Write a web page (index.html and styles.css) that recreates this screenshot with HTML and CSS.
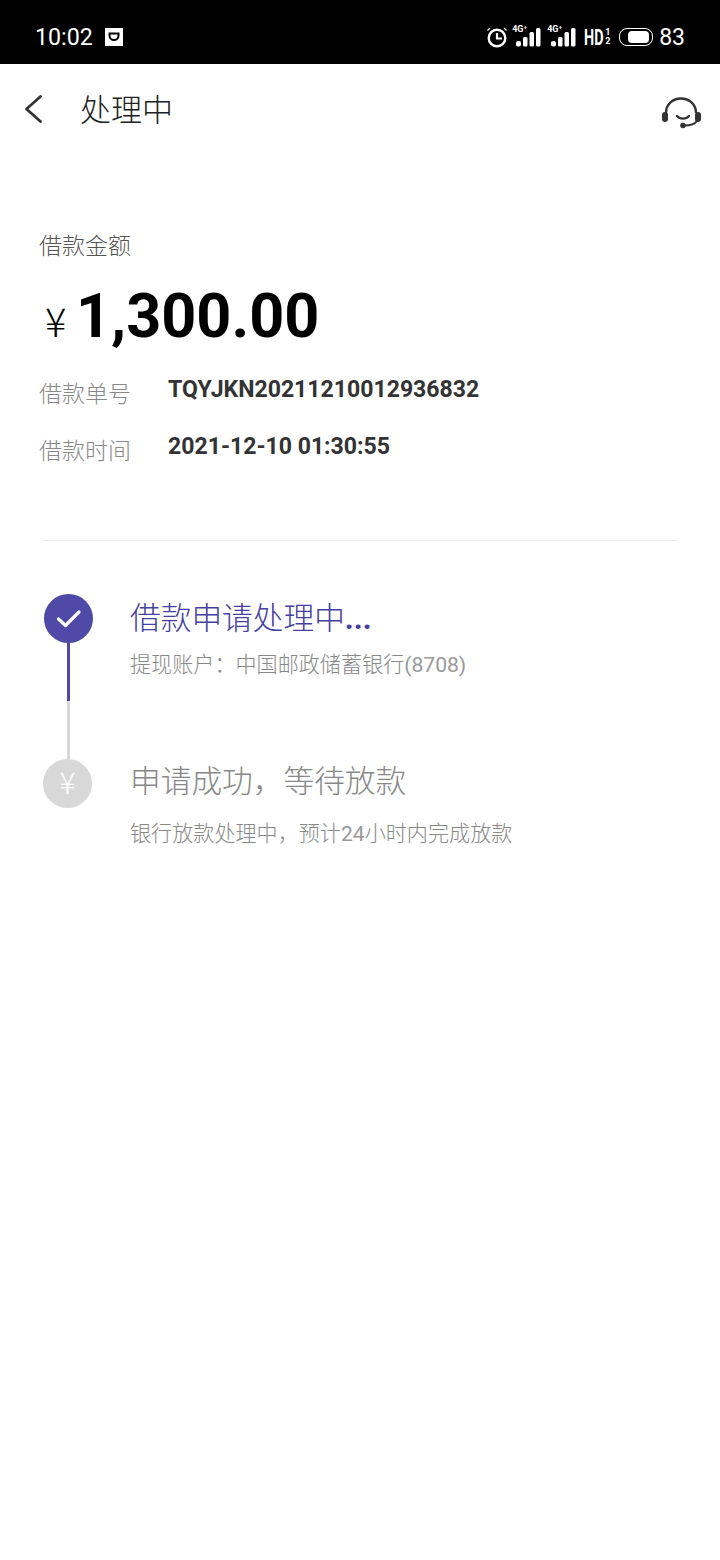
FILE: index.html
```html
<!DOCTYPE html>
<html lang="zh-CN">
<head>
<meta charset="utf-8">
<title>处理中</title>
<link rel="stylesheet" href="styles.css">
</head>
<body>
<header class="status">
  <div class="status-left">
    <span class="clock">10:02</span>
    <svg class="app-icon" width="20" height="20" viewBox="0 0 20 20"><path fill="#fff" fill-rule="evenodd" d="M1 1h18v18H1zM4.500 5.500v3a5.500 5.500 0 0 0 11 0v-3zM6.500 7.500h7v1a3.500 3.500 0 0 1-7 0z"/></svg>
  </div>
  <div class="status-right">
    <svg class="alarm" width="22" height="22" viewBox="0 0 22 22" fill="none" stroke="#fff"><circle cx="11" cy="12" r="8.300" stroke-width="2.400"/><path d="M11 7V12.500H16" stroke-width="2.200"/><path d="M1.500 4.500 4 2M20.500 4.500 18 2" stroke-width="1.300"/></svg>
    <div class="signal">
      <span class="net">4G⁺</span>
      <svg width="30" height="20" viewBox="0 0 30 20" fill="#fff"><rect x="5" y="14" width="5" height="5.500" rx="2"/><rect x="12" y="10" width="4.500" height="9.500" rx="1.500"/><rect x="18.500" y="5" width="4.500" height="14.500" rx="1.500"/><rect x="25" y="1" width="4.500" height="18.500" rx="1.500"/></svg>
    </div>
    <div class="signal">
      <span class="net">4G⁺</span>
      <svg width="30" height="20" viewBox="0 0 30 20" fill="#fff"><rect x="5" y="14" width="5" height="5.500" rx="2"/><rect x="12" y="10" width="4.500" height="9.500" rx="1.500"/><rect x="18.500" y="5" width="4.500" height="14.500" rx="1.500"/><rect x="25" y="1" width="4.500" height="18.500" rx="1.500"/></svg>
    </div>
    <div class="hd"><span class="hd-text">HD</span><span class="hd-sub">1<br>2</span></div>
    <div class="battery"><div class="battery-fill"></div></div>
    <span class="level">83</span>
  </div>
</header>

<nav class="nav">
  <div class="nav-left">
    <svg width="20" height="30" viewBox="0 0 20 30" fill="none" stroke="#333" stroke-width="2.800" stroke-linecap="round" stroke-linejoin="round"><path d="M16.500 2.500 2.500 15 16.500 27.500"/></svg>
    <h1 class="nav-title">处理中</h1>
  </div>
  <svg class="support" width="40" height="32" viewBox="0 0 40 32" fill="none" stroke="#333"><path d="M5 16C5 7 12 1.500 20 1.500S35 7 35 16" stroke-width="2.400"/><path d="M16 19c3 3.500 9 3.500 12 0" stroke-width="2.400" stroke-linecap="round"/><path d="M36 24c-2 3-6 4.500-13 4.500" stroke-width="2"/><rect x="1" y="15" width="6" height="10" rx="3" fill="#333" stroke="none"/><rect x="34" y="15" width="6" height="10" rx="3" fill="#333" stroke="none"/><circle cx="22" cy="28.500" r="2.800" fill="#333" stroke="none"/></svg>
</nav>

<main class="content">
  <section class="summary">
    <p class="amount-label">借款金额</p>
    <div class="amount"><span class="currency">¥</span><span class="value">1,300.00</span></div>
    <div class="meta-row"><span class="meta-label">借款单号</span><span class="meta-value">TQYJKN20211210012936832</span></div>
    <div class="meta-row"><span class="meta-label">借款时间</span><span class="meta-value">2021-12-10 01:30:55</span></div>
  </section>
  <hr class="divider">
  <section class="timeline">
    <div class="rail">
      <span class="dot dot-active">
        <svg width="26" height="20" viewBox="0 0 26 20" fill="none" stroke="#fff" stroke-width="3.200" stroke-linecap="round" stroke-linejoin="round"><path d="M2.500 10 9.500 16.500 23 3"/></svg>
      </span>
      <span class="line line-active"></span>
      <span class="line line-idle"></span>
      <span class="dot dot-idle">¥</span>
    </div>
    <div class="steps">
      <div class="step step-first">
        <p class="step-title step-title-active">借款申请处理中<span class="ellipsis">...</span></p>
        <p class="step-desc">提现账户：中国邮政储蓄银行<span class="num">(8708)</span></p>
      </div>
      <div class="step step-second">
        <p class="step-title step-title-idle">申请成功，等待放款</p>
        <p class="step-desc">银行放款处理中，预计<span class="num">24</span>小时内完成放款</p>
      </div>
    </div>
  </section>
</main>
</body>
</html>
```
FILE: styles.css
```css
* { box-sizing: border-box; }
html, body { margin: 0; padding: 0; }
body {
  width: 720px;
  height: 1560px;
  background: #fff;
  font-family: Roboto, "Noto Sans CJK SC", sans-serif;
  overflow: hidden;
}
p, h1 { margin: 0; font-weight: 400; }

.status {
  height: 64px;
  background: #000;
  color: #fff;
  display: flex;
  justify-content: space-between;
  align-items: center;
  padding: 16px 35px 6px 35px;
}
.status-left { display: flex; align-items: center; gap: 11px; }
.clock { font-size: 23.200px; }
.status-right { display: flex; align-items: center; }
.alarm { margin-right: 3px; }
.signal { position: relative; width: 30px; height: 20px; margin-right: 5px; }
.net { position: absolute; left: 1px; top: -3px; font-size: 9px; line-height: 11px; font-weight: 700; }
.hd { display: flex; align-items: center; width: 28px; margin-left: 3px; }
.hd-text { width: 21px; font-size: 22.500px; font-weight: 700; transform: scaleX(.64); transform-origin: left center; }
.hd-sub { font-size: 9px; line-height: 9px; font-weight: 700; }
.battery { width: 34px; height: 18px; border: 1.500px solid #fff; border-radius: 8px; padding: 2px 3px 2px 8px; margin: 0 6px 0 7px; }
.battery-fill { height: 100%; background: #fff; border-radius: 4px; }
.level { font-size: 23px; }

.nav {
  height: 90px;
  display: flex;
  justify-content: space-between;
  align-items: center;
  padding: 0 19px 0 24px;
}
.nav-left { display: flex; align-items: center; gap: 36px; }
.nav-title { font-size: 31px; color: #222; line-height: 44px; margin-top: 4px; font-weight: 300; }
.support { margin-top: 7px; }

.content { padding: 0 43px; }
.summary { margin-left: -4px; padding-top: 77px; }
.amount-label { font-size: 23px; line-height: 32px; color: #555; font-weight: 300; }
.amount { display: flex; align-items: baseline; margin: 18px 0 22px; padding-left: 6px; height: 70px; }
.currency { font-family: "Noto Sans CJK SC", sans-serif; font-size: 40px; font-weight: 300; color: #000; width: 31px; }
.value { font-size: 61.200px; font-weight: 700; color: #000; line-height: 70px; }
.meta-row { display: flex; align-items: flex-start; height: 57px; }
.meta-label { width: 129px; font-size: 23px; line-height: 34px; color: #888; padding-top: 5px; font-weight: 300; }
.meta-value { font-size: 23.050px; font-weight: 700; line-height: 34px; color: #333; }
.divider { height: 1px; margin: 53px 0 0; border: 0; background: #eee; }

.timeline { display: flex; margin-top: 53px; }
.rail { width: 86px; margin-left: 1px; display: flex; flex-direction: column; align-items: flex-start; }
.dot { width: 49px; height: 49px; border-radius: 50%; display: flex; align-items: center; justify-content: center; color: #fff; }
.dot-active { background: #4f4aa8; }
.dot-idle { background: #d8d8d8; font-family: "Noto Sans CJK SC", sans-serif; font-size: 30px; font-weight: 300; margin-left: -1px; padding-bottom: 5px; }
.line { width: 3px; height: 58px; margin-left: 23px; }
.line-active { background: #4f4aa8; }
.line-idle { background: #d8d8d8; }
.step-first { height: 166px; padding-top: 3px; }
.step-title { font-size: 30.700px; line-height: 44px; font-weight: 300; }
.step-title-active { color: #4540a2; }
.step-title-idle { color: #888; }
.ellipsis { font-weight: 700; }
.step-desc { font-size: 21.100px; line-height: 30px; color: #888; margin-top: 9px; font-weight: 300; }
.num { font-weight: 400; color: #999; }
.step-second .step-desc { margin-top: 15px; }
```
